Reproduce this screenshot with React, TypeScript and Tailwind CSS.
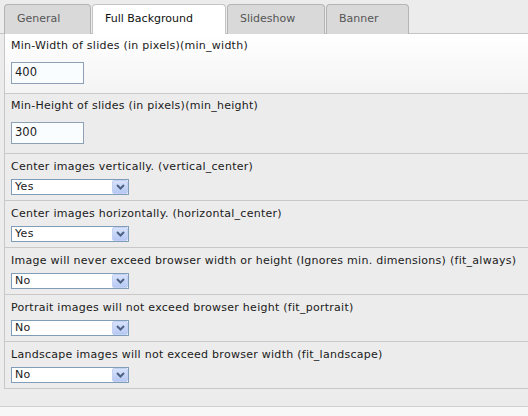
import React from "react";

function Tab({ label, active, w }: { label: string; active?: boolean; w: string }) {
  return (
    <div
      className={
        "h-[30px] rounded-t-[4px] border border-b-0 pl-[12px] flex items-center " +
        w +
        (active
          ? " bg-white border-[#c4c4c4] text-[#111] relative z-10"
          : " bg-[#d9d9d9] border-[#b4b4b4] text-[#555] h-[29px]")
      }
    >
      {label}
    </div>
  );
}

function Chevron() {
  return (
    <div className="w-[16px] h-[14px] bg-gradient-to-b from-[#d7e2fb] to-[#b7c9f3] border border-[#c3d1f3] rounded-[2px] flex items-center justify-center">
      <svg width="9" height="6" viewBox="0 0 9 6">
        <path d="M1 1 L4.5 4.5 L8 1" stroke="#4d6185" strokeWidth="2" fill="none" />
      </svg>
    </div>
  );
}

function Select({ value }: { value: string }) {
  return (
    <div className="mt-[4px] w-[118px] h-[16px] border border-[#7f9db9] bg-white flex items-center justify-between pl-[3px] pr-0">
      <span className="leading-[14px] tracking-[0.3px]">{value}</span>
      <Chevron />
    </div>
  );
}

function InputRow({ label, value, first }: { label: string; value: string; first?: boolean }) {
  return (
    <div
      className={
        "px-[6px] pt-[4px] pb-[9px] border-b border-[#c8c8c8] " +
        (first ? "bg-gradient-to-b from-white to-[#f4f4f4]" : "")
      }
    >
      <div className="leading-[16px] tracking-[0.25px]">{label}</div>
      <div className="mt-[8px] w-[73px] h-[22px] border border-[#8da0b4] bg-[#fafdff] flex items-center pl-[3px] text-[11.5px]">
        {value}
      </div>
    </div>
  );
}

function SelectRow({ label, value }: { label: string; value: string }) {
  return (
    <div className="px-[6px] pt-[5px] pb-[5px] border-b border-[#c8c8c8]">
      <div className="leading-[16px] tracking-[0.27px] whitespace-nowrap">{label}</div>
      <Select value={value} />
    </div>
  );
}

export default function App() {
  return (
    <div className="w-[528px] h-[416px] bg-[#ececec] font-['DejaVu_Sans',sans-serif] text-[11px] text-[#1a1a1a] overflow-hidden flex flex-col">
      <div className="pt-[4px] pl-[4px] flex gap-[1px] border-b border-[#c4c4c4] h-[34px] items-start">
        <Tab label="General" w="w-[87px]" />
        <Tab label="Full Background" w="w-[134px]" active />
        <Tab label="Slideshow" w="w-[98px]" />
        <Tab label="Banner" w="w-[83px]" />
      </div>
      <div className="ml-[4px] border-l border-[#c8c8c8]">
        <InputRow label="Min-Width of slides (in pixels)(min_width)" value="400" first />
        <InputRow label="Min-Height of slides (in pixels)(min_height)" value="300" />
        <SelectRow label="Center images vertically. (vertical_center)" value="Yes" />
        <SelectRow label="Center images horizontally. (horizontal_center)" value="Yes" />
        <SelectRow
          label="Image will never exceed browser width or height (Ignores min. dimensions) (fit_always)"
          value="No"
        />
        <SelectRow label="Portrait images will not exceed browser height (fit_portrait)" value="No" />
        <SelectRow label="Landscape images will not exceed browser width (fit_landscape)" value="No" />
      </div>
      <div className="h-[17px]" />
      <div className="flex-1 border-t border-[#d0d0d0] bg-[#f7f7f7]" />
    </div>
  );
}
